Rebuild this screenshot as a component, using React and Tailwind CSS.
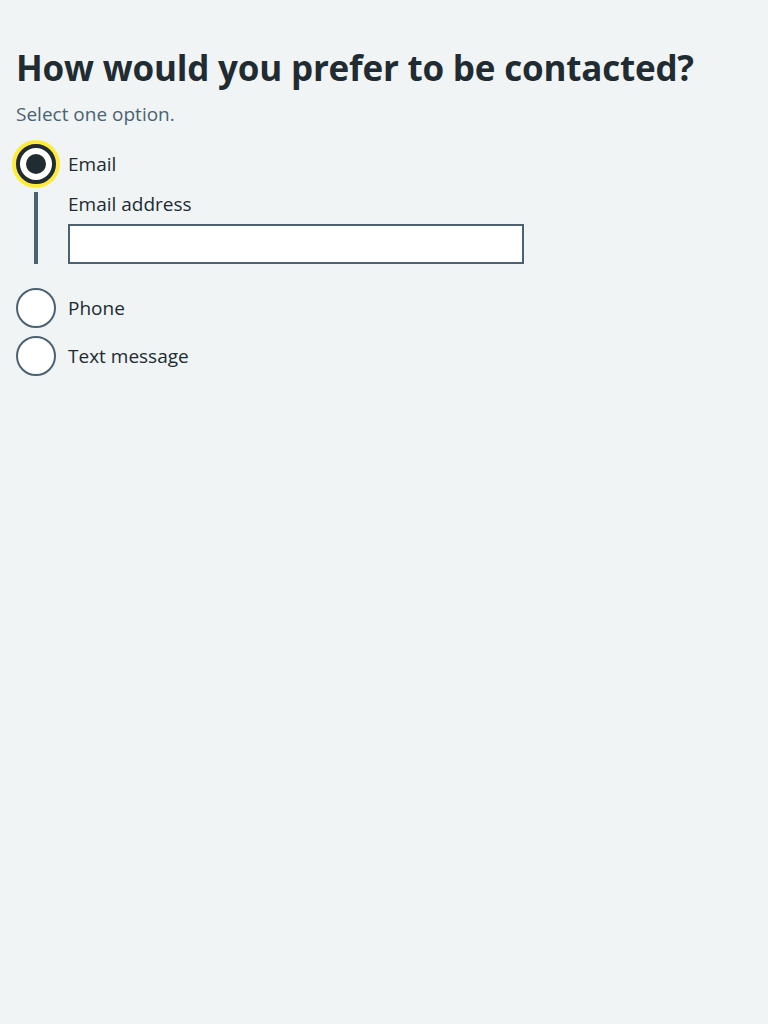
import { useState } from 'react';

const options = [
  { id: 'email', label: 'Email' },
  { id: 'phone', label: 'Phone' },
  { id: 'text', label: 'Text message' },
];

function Radio({ checked, focused }) {
  return (
    <span
      className={`relative flex h-10 w-10 shrink-0 items-center justify-center rounded-full bg-white ${
        checked ? 'border-4 border-[#212b32]' : 'border-2 border-[#4c6272]'
      } ${focused ? 'shadow-[0_0_0_4px_#ffeb3b]' : ''}`}
    >
      {checked && <span className="h-5 w-5 rounded-full bg-[#212b32]" />}
    </span>
  );
}

export default function App() {
  const [value, setValue] = useState('email');

  return (
    <div className="min-h-screen bg-[#f0f4f5] px-4 pt-[44px] text-[#212b32] [font-family:'Open_Sans',sans-serif]">
      <h1 className="text-[35px] font-bold leading-[48px] tracking-[-0.2px]">How would you prefer to be contacted?</h1>
      <p className="mt-[10px] text-[19px] leading-[24px] text-[#4c6272]">Select one option.</p>

      <div className="mt-[18px] flex flex-col gap-2">
        {options.map((o) => (
          <div key={o.id}>
            <label className="flex cursor-pointer items-center gap-3" onClick={() => setValue(o.id)}>
              <Radio checked={value === o.id} focused={value === o.id} />
              <span className="text-[19px] leading-[24px]">{o.label}</span>
            </label>
            {o.id === 'email' && value === 'email' && (
              <div className="ml-[18px] mt-2 mb-4 border-l-4 border-[#4c6272] pl-[30px]">
                <label className="block pb-2 text-[19px] leading-[24px]">Email address</label>
                <input type="email" className="block h-10 w-[456px] border-2 border-[#4c6272] bg-white px-2 outline-none" />
              </div>
            )}
          </div>
        ))}
      </div>
    </div>
  );
}
